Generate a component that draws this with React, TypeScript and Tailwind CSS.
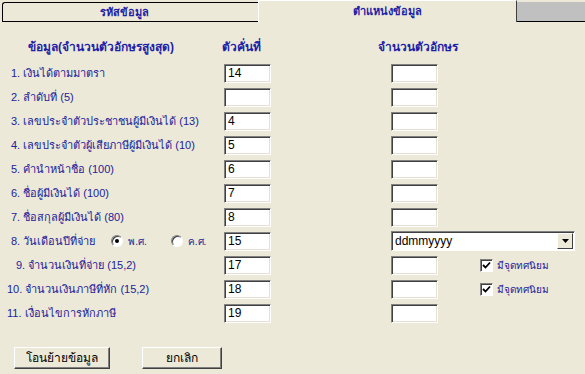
import React from "react";

const FONT = "font-['Tahoma','Liberation_Sans','Noto_Sans','DejaVu_Sans',sans-serif]";

type Row = {
  label: string;
  indent: string;
  sep: string;
  extra?: "date" | "decimal";
};

const rows: Row[] = [
  { label: "1. เงินได้ตามมาตรา", indent: "pl-[11px]", sep: "14" },
  { label: "2. ลำดับที่ (5)", indent: "pl-[11px]", sep: "" },
  { label: "3. เลขประจำตัวประชาชนผู้มีเงินได้ (13)", indent: "pl-[11px]", sep: "4" },
  { label: "4. เลขประจำตัวผู้เสียภาษีผู้มีเงินได้ (10)", indent: "pl-[11px]", sep: "5" },
  { label: "5. คำนำหน้าชื่อ (100)", indent: "pl-[11px]", sep: "6" },
  { label: "6. ชื่อผู้มีเงินได้ (100)", indent: "pl-[11px]", sep: "7" },
  { label: "7. ชื่อสกุลผู้มีเงินได้ (80)", indent: "pl-[11px]", sep: "8" },
  { label: "8. วันเดือนปีที่จ่าย", indent: "pl-[11px]", sep: "15", extra: "date" },
  { label: "9. จำนวนเงินที่จ่าย (15,2)", indent: "pl-[16px]", sep: "17", extra: "decimal" },
  { label: "10. จำนวนเงินภาษีที่หัก (15,2)", indent: "pl-[7px]", sep: "18", extra: "decimal" },
  { label: "11. เงื่อนไขการหักภาษี", indent: "pl-[7px]", sep: "19" },
];

// กล่องข้อความแบบ Windows classic (ขอบจม)
function Box({ value, className = "w-[47px]" }: { value?: string; className?: string }) {
  return (
    <div
      className={`${className} h-[19px] bg-white border border-t-[#808080] border-l-[#808080] border-b-white border-r-white shadow-[inset_1px_1px_0_#404040,inset_-1px_-1px_0_#e4e1d4] pl-[3px] text-[12px] leading-[17px] text-black`}
    >
      {value}
    </div>
  );
}

function Radio({ checked }: { checked?: boolean }) {
  return (
    <span className="w-[12px] h-[12px] rounded-full bg-white border border-t-[#808080] border-l-[#808080] border-b-white border-r-white shadow-[inset_1px_1px_0_#404040] flex items-center justify-center">
      {checked && <span className="w-[4px] h-[4px] rounded-full bg-black" />}
    </span>
  );
}

function Check() {
  return (
    <span className="w-[13px] h-[13px] bg-white border border-t-[#808080] border-l-[#808080] border-b-white border-r-white shadow-[inset_1px_1px_0_#404040] flex items-center justify-center">
      <svg width="9" height="9" viewBox="0 0 9 9">
        <path d="M1 4 L3.5 6.5 L8 1.5" stroke="#000" strokeWidth="1.8" fill="none" />
      </svg>
    </span>
  );
}

function Button({ children, className }: { children: React.ReactNode; className: string }) {
  return (
    <div
      className={`${className} h-[22px] bg-[#ece9d8] border border-t-white border-l-white border-b-[#404040] border-r-[#404040] shadow-[inset_-1px_-1px_0_#808080] flex items-center justify-center text-[12px] text-black`}
    >
      {children}
    </div>
  );
}

export default function App() {
  return (
    <div className={`w-[585px] h-[374px] bg-[#ece9d8] overflow-hidden ${FONT}`}>
      {/* แถบแท็บ */}
      <div className="flex h-[22px] items-end">
        <div className="ml-[2px] w-[256px] h-[20px] pr-[12px] border-t border-l border-b border-black rounded-tl-[3px] bg-[#ece9d8] flex items-center justify-center text-[11px] font-bold text-[#1e1ea8]">
          รหัสข้อมูล
        </div>
        <div className="w-[259px] h-[22px] border-t border-l border-t-white border-l-white border-r border-r-[#404040] bg-[#ece9d8] flex items-center justify-center text-[11px] font-bold text-[#1e1ea8]">
          ตำแหน่งข้อมูล
        </div>
        <div className="flex-1 h-[20px] bg-[#c0c0c0] border-b border-black" />
      </div>

      {/* หัวตาราง */}
      <div className="flex items-center h-[28px] mt-[11px] text-[12px] font-bold text-[#1e1ea8]">
        <div className="w-[222px] pl-[28px]">ข้อมูล(จำนวนตัวอักษรสูงสุด)</div>
        <div className="w-[156px]">ตัวคั่นที่</div>
        <div>จำนวนตัวอักษร</div>
      </div>

      {/* รายการข้อมูล */}
      <div className="flex flex-col">
        {rows.map((r) => (
          <div key={r.label} className="flex items-center h-[24px] text-[11px] text-[#22229a]">
            <div className={`w-[224px] ${r.indent} flex items-center`}>
              <span>{r.label}</span>
              {r.extra === "date" && (
                <span className="flex items-center ml-[16px] gap-[5px]">
                  <Radio checked />
                  <span className="text-[10px]">พ.ศ.</span>
                  <span className="w-[14px]" />
                  <Radio />
                  <span className="text-[10px]">ค.ศ.</span>
                </span>
              )}
            </div>
            <Box value={r.sep} />
            <div className="w-[120px]" />
            {r.extra === "date" ? (
              <div className="w-[184px] h-[20px] bg-white border border-t-[#808080] border-l-[#808080] border-b-white border-r-white shadow-[inset_1px_1px_0_#404040] flex items-center text-black">
                <span className="flex-1 pl-[3px] text-[12px]">ddmmyyyy</span>
                <span className="w-[16px] h-[16px] mr-[1px] bg-[#ece9d8] border border-t-white border-l-white border-b-[#404040] border-r-[#404040] flex items-center justify-center">
                  <svg width="7" height="4" viewBox="0 0 7 4">
                    <path d="M0 0 H7 L3.5 4 Z" fill="#000" />
                  </svg>
                </span>
              </div>
            ) : (
              <Box />
            )}
            {r.extra === "decimal" && (
              <div className="flex items-center ml-[42px] gap-[4px] text-[10px]">
                <Check />
                <span>มีจุดทศนิยม</span>
              </div>
            )}
          </div>
        ))}
      </div>

      {/* ปุ่ม */}
      <div className="flex mt-[22px] pl-[14px] gap-[32px]">
        <Button className="w-[96px]">โอนย้ายข้อมูล</Button>
        <Button className="w-[80px]">ยกเลิก</Button>
      </div>
    </div>
  );
}
